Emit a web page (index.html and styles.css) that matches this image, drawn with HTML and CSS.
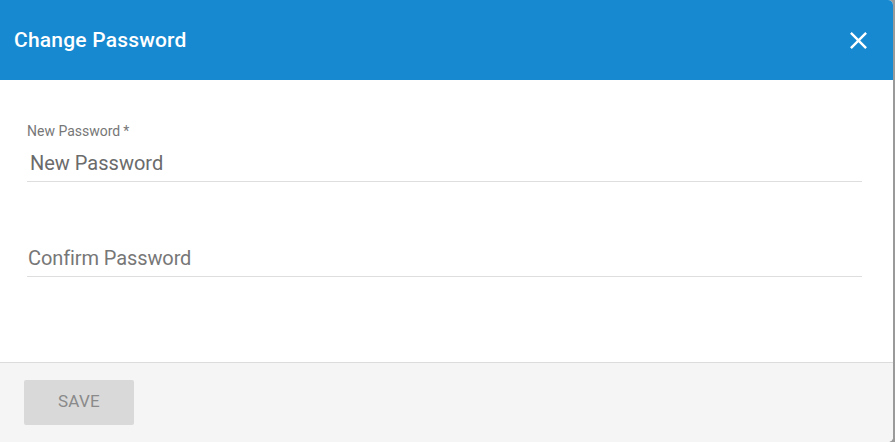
FILE: index.html
```html
<!DOCTYPE html>
<html lang="en">
<head>
<meta charset="utf-8">
<title>Change Password</title>
<link rel="stylesheet" href="styles.css">
</head>
<body>
<div class="dialog">
  <header class="dialog-header">
    <h1 class="dialog-title">Change Password</h1>
    <button class="close-btn" aria-label="Close">
      <svg viewBox="0 0 24 24" width="29" height="29"><path fill="#fff" d="M19 6.41L17.59 5 12 10.59 6.41 5 5 6.41 10.59 12 5 17.59 6.41 19 12 13.41 17.59 19 19 17.59 13.41 12z"/></svg>
    </button>
  </header>
  <main class="dialog-body">
    <div class="field">
      <label class="field-label">New Password<span class="req">*</span></label>
      <div class="field-input filled">New Password</div>
    </div>
    <div class="field">
      <label class="field-label empty">&nbsp;</label>
      <div class="field-input">Confirm Password</div>
    </div>
  </main>
  <footer class="dialog-footer">
    <button class="save-btn" disabled>SAVE</button>
  </footer>
</div>
</body>
</html>
```
FILE: styles.css
```css
html, body {
  margin: 0;
  padding: 0;
  height: 100%;
}
body {
  background: #9a9a9a;
  font-family: Roboto, "Noto Sans", Arial, sans-serif;
}
.dialog {
  width: 893px;
  height: 442px;
  display: flex;
  flex-direction: column;
  border-radius: 0 5px 5px 0;
  overflow: hidden;
  background: #fff;
}
.dialog-header {
  height: 80px;
  flex: none;
  background: #1689d0;
  display: flex;
  align-items: center;
  justify-content: space-between;
  padding: 0 14px;
  box-sizing: border-box;
}
.dialog-title {
  margin: 0;
  color: #fff;
  font-size: 21px;
  font-weight: 500;
  letter-spacing: 0.2px;
}
.close-btn {
  background: none;
  border: 0;
  padding: 0;
  margin-right: 6px;
  width: 29px;
  height: 29px;
  display: flex;
  cursor: pointer;
}
.dialog-body {
  flex: 1;
  padding: 43px 31px 0 27px;
  display: flex;
  flex-direction: column;
  gap: 36px;
}
.field {
  display: flex;
  flex-direction: column;
}
.field-label {
  font-size: 14px;
  color: #777;
  line-height: 16px;
  height: 16px;
}
.req {
  margin-left: 3px;
}
.field-input {
  font-size: 20px;
  color: #6b6b6b;
  line-height: 24px;
  padding: 12px 0 6px 3px;
  border-bottom: 1px solid #dedede;
}
.field-input:not(.filled) {
  padding-left: 1px;
  color: #777;
  letter-spacing: -0.1px;
}
.dialog-footer {
  height: 80px;
  flex: none;
  background: #f5f5f5;
  border-top: 1px solid #dcdcdc;
  padding: 17px 24px 0;
  box-sizing: border-box;
}
.save-btn {
  width: 110px;
  height: 45px;
  border: 0;
  border-radius: 2px;
  background: #d9d9d9;
  color: #8a8a8a;
  font-family: Roboto, "Noto Sans", Arial, sans-serif;
  font-size: 17px;
  letter-spacing: 0.3px;
  padding: 0 0 3px;
}
```
